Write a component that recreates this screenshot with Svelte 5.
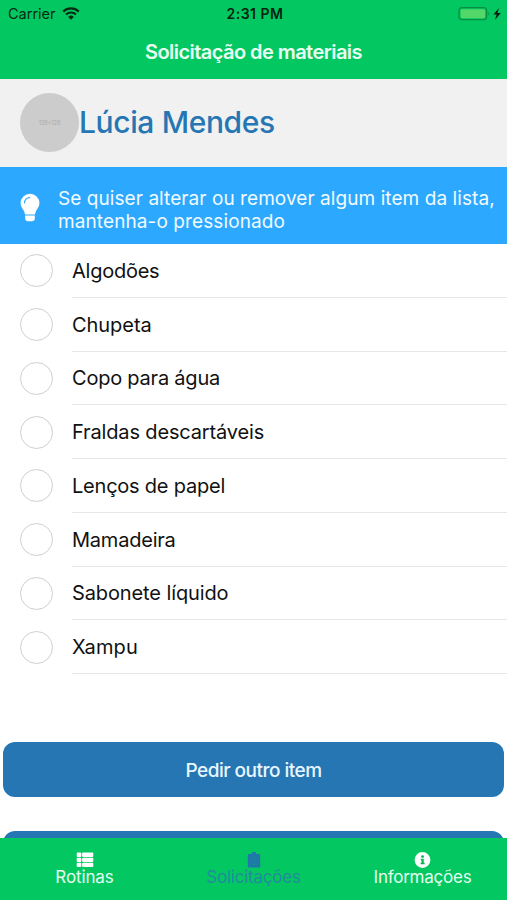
<script>
  const items = [
    { name: 'Algodões', ls: -0.25 },
    { name: 'Chupeta', ls: -0.05 },
    { name: 'Copo para água', ls: -0.22 },
    { name: 'Fraldas descartáveis', ls: -0.15 },
    { name: 'Lenços de papel', ls: -0.22 },
    { name: 'Mamadeira', ls: -0.22 },
    { name: 'Sabonete líquido', ls: -0.11 },
    { name: 'Xampu', ls: 0.1 }
  ];
</script>

<div class="screen">
  <div class="status">
    <div class="side left">
      <span class="carrier">Carrier</span>
      <svg class="wifi" width="18" height="13" viewBox="0 0 18 13">
        <path d="M1.2 4.6a11.2 11.2 0 0 1 15.6 0" fill="none" stroke="#062b12" stroke-width="2.2" />
        <path d="M4 7.5a7.2 7.2 0 0 1 10 0" fill="none" stroke="#062b12" stroke-width="2" />
        <path d="M6.2 9.9a4 4 0 0 1 5.6 0L9 12.7z" fill="#062b12" />
      </svg>
    </div>
    <span class="time">2:31 PM</span>
    <div class="side right">
      <svg width="44" height="16" viewBox="0 0 44 16">
        <rect x="1" y="1.7" width="27.6" height="12" rx="3" fill="none" stroke="#078f43" stroke-width="1.3" />
        <rect x="2.6" y="3.2" width="24.4" height="9" rx="1.4" fill="#53d769" />
        <path d="M30.2 5.6q1.7 2.1 0 4.2z" fill="#078f43" />
        <path d="M41 2 35.4 8.600h3.200L37 13.700 42.800 7h-3.400z" fill="#031c0b" />
      </svg>
    </div>
  </div>
  <header><h1>Solicitação de materiais</h1></header>

  <section class="profile">
    <div class="avatar"><span>126×126</span></div>
    <h2>Lúcia Mendes</h2>
  </section>

  <section class="tip">
    <svg width="20" height="30" viewBox="0 0 20 30">
      <path d="M10 .8A9.3 9.3 0 0 0 .6 10.1c0 3.600 1.800 5.300 3.100 7.500.8 1.300 1 2.500 1.300 3.800h10c.3-1.300.5-2.500 1.300-3.800 1.300-2.200 3.100-3.900 3.100-7.500A9.300 9.300 0 0 0 10 .8z" fill="#fff" />
      <path d="M4.500 9.800A5.400 5.400 0 0 1 9.600 4.700" fill="none" stroke="#2ca9ff" stroke-width="1.300" stroke-linecap="round" />
      <path d="M5.200 22.600h9.600v2.600a3 3 0 0 1-3 3H8.200a3 3 0 0 1-3-3z" fill="#fff" />
    </svg>
    <p><span class="l1">Se quiser alterar ou remover algum item da lista,</span><br /><span class="l2">mantenha-o pressionado</span></p>
  </section>

  <ul>
    {#each items as item}
      <li>
        <span class="radio"></span>
        <div class="label"><span style="letter-spacing: {item.ls}px">{item.name}</span></div>
      </li>
    {/each}
  </ul>

  <div class="actions">
    <button>Pedir outro item</button>
    <button aria-label="Enviar"></button>
  </div>

  <nav>
    <div class="tab">
      <svg width="18" height="16" viewBox="0 0 18 16" fill="#fff">
        <rect x=".7" y=".6" width="4.600" height="4.300" rx="1" /><rect x="6.100" y=".6" width="11.200" height="4.300" rx="1" />
        <rect x=".7" y="5.700" width="4.600" height="4.300" rx="1" /><rect x="6.100" y="5.700" width="11.200" height="4.300" rx="1" />
        <rect x=".7" y="10.800" width="4.600" height="4.300" rx="1" /><rect x="6.100" y="10.800" width="11.200" height="4.300" rx="1" />
      </svg>
      <span class="t1">Rotinas</span>
    </div>
    <div class="tab active">
      <svg width="18" height="16" viewBox="0 0 18 16">
        <path d="M4 2h2.700a2.300 2.300 0 0 1 4.600 0H14a1.200 1.200 0 0 1 1.200 1.200v11.200a1.200 1.200 0 0 1-1.200 1.200H4a1.200 1.200 0 0 1-1.200-1.200V3.200A1.200 1.200 0 0 1 4 2z" fill="#2176ae" />
        <path d="M7.400 7h5.400M7.400 9.800h5.400M7.400 12.500h5.400M5 7h1M5 9.800h1M5 12.500h1M7 4.200h4" stroke="#128f86" stroke-width=".9" />
      </svg>
      <span class="t2">Solicitações</span>
    </div>
    <div class="tab">
      <svg width="18" height="16" viewBox="0 0 18 16">
        <circle cx="8.500" cy="8" r="7.900" fill="#fff" />
        <circle cx="8.600" cy="4.600" r="1.400" fill="#04b457" />
        <path d="M6.800 6.800h2.900v4h.9v1.500H6.600v-1.500h.9V8.300h-.7z" fill="#04b457" />
      </svg>
      <span class="t3">Informações</span>
    </div>
  </nav>
</div>

<style>
  :global(body) { background: #fff; }
  .screen { width: 507px; height: 900px; display: flex; flex-direction: column; overflow: hidden; background: #fff; font-family: Inter, "Liberation Sans", sans-serif; color: #111; }
  h1, h2, p, ul { margin: 0; padding: 0; font-weight: 400; }
  .status { flex: none; height: 27px; display: flex; align-items: center; background: #03c861; color: #062b12; }
  .side { flex: 1; display: flex; align-items: center; }
  .left { padding-left: 8px; gap: 6px; }
  .right { justify-content: flex-end; padding-right: 5px; }
  .carrier { font-size: 14.500px; }
  .time { font-size: 14px; font-weight: 600; letter-spacing: .5px; color: #042410; }
  header { flex: none; height: 52px; box-sizing: border-box; padding-bottom: 2px; display: flex; justify-content: center; align-items: center; background: #03c861; }
  h1 { font-size: 20px; font-weight: 600; letter-spacing: -.56px; color: #e9fff2; }
  .profile { flex: none; height: 88px; box-sizing: border-box; background: #f1f1f1; display: flex; align-items: center; padding: 0 0 1px 20px; }
  .avatar { width: 59px; height: 59px; border-radius: 50%; background: #ccc; display: flex; align-items: center; justify-content: center; }
  .avatar span { font-size: 5.500px; color: #aaa; }
  h2 { font-size: 30px; font-weight: 500; color: #2676b4; letter-spacing: -.38px; padding-bottom: 2px; }
  .tip { flex: none; height: 77px; box-sizing: border-box; background: #2ca9ff; display: flex; align-items: center; gap: 18px; padding: 5px 0 0 20px; color: #f1faff; }
  .tip p { font-size: 19px; line-height: 23px; white-space: nowrap; padding-top: 3px; }
  .l1 { letter-spacing: .07px; }
  .l2 { letter-spacing: .1px; }
  ul { list-style: none; flex: none; }
  li { display: flex; align-items: center; height: 53.750px; padding-left: 20px; gap: 19px; }
  .radio { width: 33px; height: 33px; box-sizing: border-box; border: 1.500px solid #cfcfcf; border-radius: 50%; }
  .label { flex: 1; height: 100%; box-sizing: border-box; padding-top: 1px; border-bottom: 1.500px solid #e6e6e6; display: flex; align-items: center; font-size: 20px; }
  .actions { flex: 1; min-height: 0; overflow: hidden; padding: 68px 3px 0; display: flex; flex-direction: column; gap: 34px; }
  button { flex: none; height: 55px; border: 0; border-radius: 12px; background: #2676b4; color: #e9f7ff; font: 500 19px Inter, "Liberation Sans", sans-serif; letter-spacing: -.5px; padding: 2px 0 0; }
  nav { flex: none; height: 62px; background: #03c861; display: flex; }
  .tab { flex: 1; display: flex; flex-direction: column; align-items: center; padding-top: 14px; color: #e4fff0; font-size: 17px; line-height: 18px; }
  .tab svg { flex: none; }
  .t1 { letter-spacing: -.12px; }
  .t2, .t3 { letter-spacing: -.24px; }
  .active { color: #218c9c; }
</style>
